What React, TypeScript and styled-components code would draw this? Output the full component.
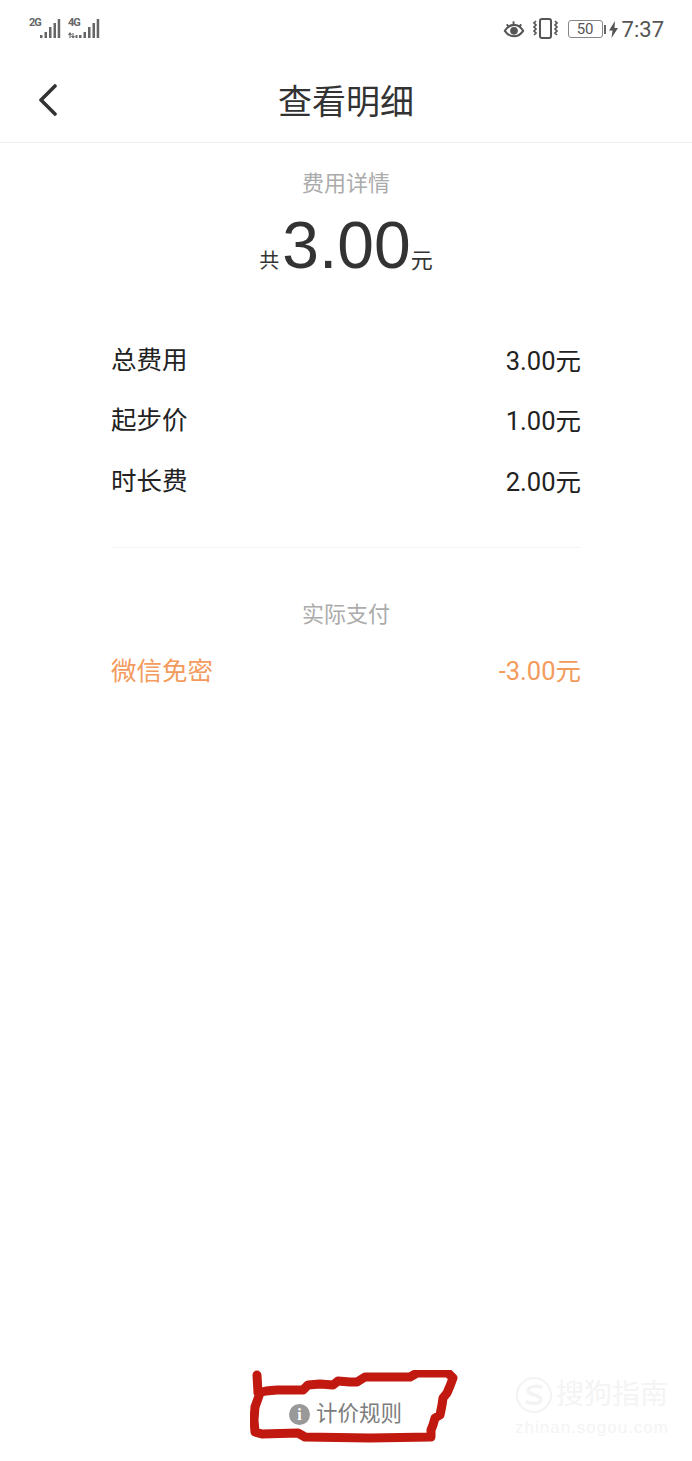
import styled, { createGlobalStyle } from "styled-components";

const GlobalStyle = createGlobalStyle`
  html, body {
    margin: 0;
    padding: 0;
    background: #fff;
  }
  * {
    box-sizing: border-box;
  }
`;

const FONT = `Roboto, "Noto Sans CJK SC", sans-serif`;

type Item = { label: string; value: string };

const items: Item[] = [
  { label: "总费用", value: "3.00元" },
  { label: "起步价", value: "1.00元" },
  { label: "时长费", value: "2.00元" },
];

const bars = [
  { x: 11, top: 17 },
  { x: 15.5, top: 14 },
  { x: 20, top: 9 },
  { x: 24.5, top: 5 },
  { x: 28.7, top: 1 },
];

const Signal = ({ tag, arrows }: { tag: string; arrows?: boolean }) => (
  <SignalBox>
    <SignalTag>{tag}</SignalTag>
    <svg width="32" height="20" viewBox="0 0 32 20">
      {arrows ? (
        <path d="M2 15v5M0.500 17l1.500-2 1.500 2M5 20v-5M3.500 18l1.500 2 1.500-2" stroke="#666" strokeWidth="1.100" fill="none" />
      ) : null}
      {arrows ? <rect x="7.500" y="17" width="2" height="3" fill="#666" /> : null}
      {bars.map((bar) => (
        <rect key={bar.x} x={bar.x} y={bar.top} width="2.500" height={20 - bar.top} fill="#666" />
      ))}
    </svg>
  </SignalBox>
);

const App = () => {
  return (
    <Page>
      <GlobalStyle />
      <StatusBar>
        <Signals>
          <Signal tag="2G" />
          <Signal tag="4G" arrows />
        </Signals>
        <StatusRight>
          <svg width="22" height="20" viewBox="0 0 24 20" fill="none" stroke="#555">
            <path d="M2 12c3-5 6.500-6.500 10-6.500S19 7 22 12c-3 4.500-6.500 6-10 6s-7-1.500-10-6z" strokeWidth="2.200" />
            <circle cx="12" cy="12" r="3.800" fill="#555" />
            <path d="M4 5l2 2M11.500 1.500v3M20 5l-2 2" strokeWidth="2" />
          </svg>
          <svg width="28" height="22" viewBox="0 0 28 22" fill="none" stroke="#555" strokeWidth="1.700">
            <rect x="8" y="1" width="11" height="19" rx="2" strokeWidth="2" />
            <path d="M4 3l-2 2 2 2-2 2 2 2-2 2 2 2-2 2M23 3l2 2-2 2 2 2-2 2 2 2-2 2 2 2" />
          </svg>
          <Battery>
            <BatteryBody>50</BatteryBody>
            <BatteryCap />
          </Battery>
          <BoltIcon width="9" height="17" viewBox="0 0 9 17">
            <path d="M6 0L0 9.500h3.500L2.500 17 9 7H5.500z" fill="#555" />
          </BoltIcon>
          <Clock>7:37</Clock>
        </StatusRight>
      </StatusBar>

      <Header>
        <BackButton>
          <svg width="20" height="32" viewBox="0 0 20 32" fill="none">
            <path d="M17 2L3 16l14 14" stroke="#333" strokeWidth="3.600" strokeLinecap="round" strokeLinejoin="round" />
          </svg>
        </BackButton>
        <Title>查看明细</Title>
      </Header>

      <Summary>
        <SectionLabel>费用详情</SectionLabel>
        <Total>
          <TotalUnit $size={20}>共</TotalUnit>
          <TotalAmount>3.00</TotalAmount>
          <TotalUnit $size={22}>元</TotalUnit>
        </Total>
      </Summary>

      <Rows>
        {items.map((item) => (
          <Row key={item.label}>
            <span>{item.label}</span>
            <RowValue>{item.value}</RowValue>
          </Row>
        ))}
      </Rows>

      <Divider />

      <PaidLabel>实际支付</PaidLabel>
      <PaidRow>
        <span>微信免密</span>
        <span>-3.00元</span>
      </PaidRow>

      <Footer>
        <InfoIcon>i</InfoIcon>
        <RuleText>计价规则</RuleText>
        <Scribble viewBox="0 0 220 80" width="220" height="80" fill="none">
          <path
            d="M7 5L8 23 16 21 27 20 40 20 53 20 58 15 70 14 83 15 88 11 100 12 107 12 115 7 135 7 160 7 167 3 198 3 203 8 200 16 197 23 193 28 192 35 190 45 185 48 183 55 181 60 181 67 120 68 55 67 48 63 12 64 5 62 4 50 5 37 10 23"
            stroke="#c1190f"
            strokeWidth="9"
            strokeLinecap="round"
            strokeLinejoin="round"
          />
        </Scribble>
        <Watermark>
          <WatermarkTop>
            <svg width="38" height="38" viewBox="0 0 38 38" fill="none" stroke="#f3f3f3" strokeWidth="2">
              <circle cx="19" cy="19" r="17" />
              <path d="M27 12c-2-2-13-3-14 2s14 5 13 10-12 4-15 1" strokeWidth="3.500" />
            </svg>
            <WatermarkName>搜狗指南</WatermarkName>
          </WatermarkTop>
          <WatermarkUrl>zhinan.sogou.com</WatermarkUrl>
        </Watermark>
      </Footer>
    </Page>
  );
};

export default App;

const Page = styled.div`
  width: 692px;
  height: 1461px;
  background: #fff;
  font-family: ${FONT};
  display: flex;
  flex-direction: column;
  overflow: hidden;
`;

const StatusBar = styled.div`
  height: 60px;
  padding: 14px 28px 0 29px;
  display: flex;
  justify-content: space-between;
  align-items: flex-start;
`;

const Signals = styled.div`
  display: flex;
  gap: 7px;
  padding-top: 4px;
`;

const SignalBox = styled.div`
  position: relative;
  width: 32px;
  height: 20px;
`;

const SignalTag = styled.span`
  position: absolute;
  left: 0;
  top: 0;
  font-size: 11px;
  line-height: 10px;
  letter-spacing: -1px;
  font-weight: 700;
  color: #666;
  z-index: 1;
`;

const StatusRight = styled.div`
  display: flex;
  align-items: center;
  gap: 7px;
  height: 30px;
`;

const Battery = styled.div`
  display: flex;
  align-items: center;
  gap: 1px;
  margin-left: 1px;
`;

const BatteryBody = styled.div`
  width: 35px;
  height: 18px;
  border: 1px solid #888;
  border-radius: 3px;
  font-size: 15px;
  line-height: 16px;
  text-align: center;
  color: #555;
`;

const BatteryCap = styled.div`
  width: 2px;
  height: 9px;
  background: #666;
`;

const BoltIcon = styled.svg`
  margin-left: -4px;
`;

const Clock = styled.span`
  font-size: 22px;
  color: #555;
  margin-left: -3px;
`;

const Header = styled.div`
  position: relative;
  height: 83px;
  flex: none;
  border-bottom: 1px solid #eeeeee;
  display: flex;
  align-items: center;
  justify-content: center;
`;

const BackButton = styled.div`
  position: absolute;
  left: 38px;
  top: 24px;
  display: flex;
`;

const Title = styled.div`
  font-size: 34px;
  line-height: 44px;
  color: #333;
  margin-top: 1px;
`;

const Summary = styled.div`
  display: flex;
  flex-direction: column;
  align-items: center;
  padding-top: 26px;
`;

const SectionLabel = styled.div`
  font-size: 22px;
  line-height: 30px;
  color: #ababab;
  text-align: center;
`;

const Total = styled.div`
  display: flex;
  align-items: baseline;
  justify-content: center;
  margin-top: 10px;
  color: #333;
  height: 76px;
`;

const TotalAmount = styled.span`
  font-family: "Liberation Sans", sans-serif;
  font-size: 66px;
  line-height: 72px;
  margin: 0 0 0 3px;
`;

const TotalUnit = styled.span<{ $size: number }>`
  font-size: ${(p) => p.$size}px;
  color: #333;
`;

const Rows = styled.div`
  margin-top: 42px;
  padding: 0 111px;
  display: flex;
  flex-direction: column;
`;

const Row = styled.div`
  height: 60.5px;
  display: flex;
  justify-content: space-between;
  align-items: center;
  font-size: 25.5px;
  color: #222;
`;

const RowValue = styled.span`
  padding-top: 2px;
`;

const Divider = styled.div`
  height: 1px;
  margin: 38px 111px 0;
  background: #f3f3f3;
`;

const PaidLabel = styled.div`
  margin-top: 52px;
  font-size: 22px;
  line-height: 30px;
  color: #ababab;
  text-align: center;
`;

const PaidRow = styled.div`
  margin-top: 23px;
  padding: 0 111px;
  display: flex;
  justify-content: space-between;
  align-items: center;
  font-size: 25.5px;
  line-height: 36px;
  color: #f39b5d;
`;

const Footer = styled.div`
  position: relative;
  margin-top: auto;
  height: 96px;
  padding: 0 0 0 289px;
  display: flex;
  align-items: flex-start;
`;

const InfoIcon = styled.div`
  width: 21px;
  height: 21px;
  margin-top: 39px;
  border-radius: 50%;
  background: #999;
  color: #fff;
  font-family: "Liberation Serif", serif;
  font-size: 16px;
  font-weight: 700;
  line-height: 21px;
  text-align: center;
`;

const RuleText = styled.div`
  margin: 34px 0 0 6px;
  font-size: 21.5px;
  line-height: 30px;
  color: #7d7d7d;
`;

const Scribble = styled.svg`
  position: absolute;
  left: 250px;
  top: 5px;
`;

const Watermark = styled.div`
  position: absolute;
  left: 515px;
  top: 11px;
  width: 156px;
  color: #f4f4f4;
`;

const WatermarkTop = styled.div`
  display: flex;
  align-items: center;
  gap: 3px;
`;

const WatermarkName = styled.span`
  font-size: 28px;
  line-height: 38px;
  font-weight: 400;
  white-space: nowrap;
`;

const WatermarkUrl = styled.div`
  font-family: "Liberation Sans", sans-serif;
  font-size: 17px;
  line-height: 20px;
  letter-spacing: 1px;
  white-space: nowrap;
  margin-top: 4px;
`;
